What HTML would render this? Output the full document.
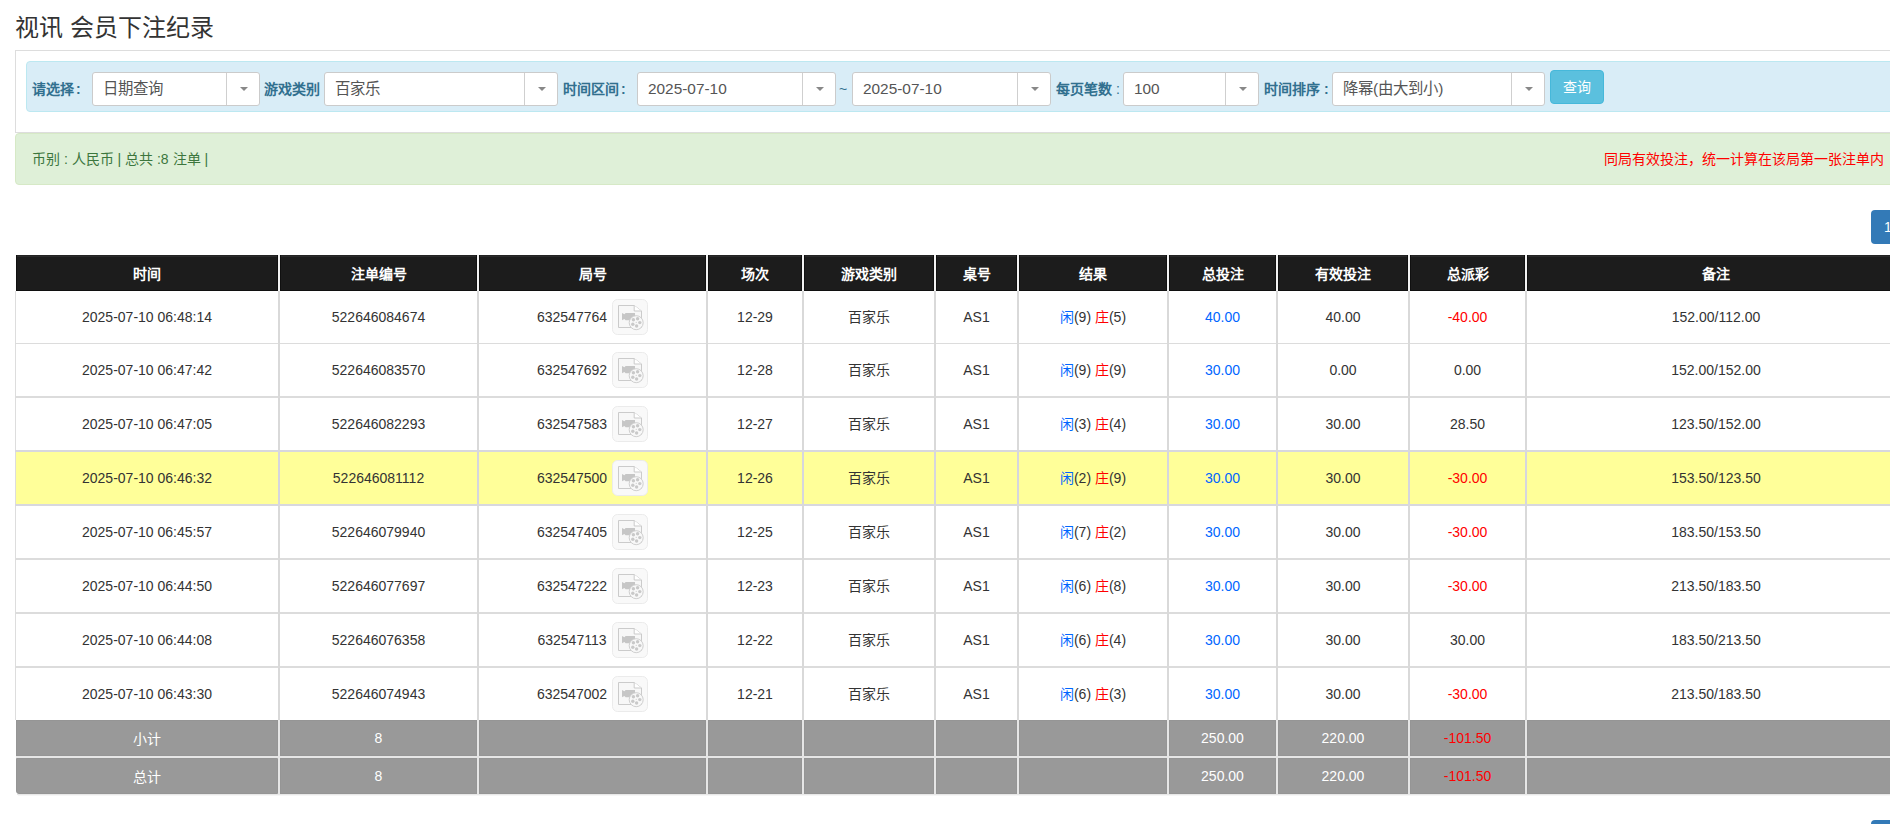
<!DOCTYPE html>
<html lang="zh-CN"><head><meta charset="utf-8"><title>视讯 会员下注纪录</title>
<style>
*{box-sizing:border-box}
html,body{margin:0;padding:0}
body{width:1890px;height:824px;overflow:hidden;position:relative;background:#fff;font-family:"Liberation Sans",sans-serif;font-size:14px;color:#333}
.a{position:absolute}
.c{position:absolute;display:flex;align-items:center;justify-content:center;white-space:nowrap}
h1{position:absolute;left:15px;top:10px;margin:0;font-size:24px;font-weight:normal;line-height:36px;color:#333}
.panel{left:15px;top:50px;width:1900px;height:83px;border:1px solid #ddd;background:#fff}
.info{left:26px;top:61px;width:1880px;height:51px;border:1px solid #bce8f1;background:#d9edf7;border-radius:4px}
.lbl{color:#31708f;font-weight:bold;top:72px;height:34px;line-height:34px}
.lbl i{font-style:normal;font-weight:normal}
.sel{top:72px;height:34px;border:1px solid #cbcbcb;border-radius:3px;background:#fff;color:#555;line-height:32px;padding-left:10px;font-size:15.4px}
.sel .dv{position:absolute;top:0;bottom:0;width:1px;background:#cfcfcf}
.sel .ar{position:absolute;top:14px;width:0;height:0;border-left:4px solid transparent;border-right:4px solid transparent;border-top:4px solid #888}
.btn{left:1550px;top:70px;width:54px;height:34px;background:#5bc0de;border:1px solid #46b8da;border-radius:4px;color:#fff;line-height:32px;text-align:center}
.ok{left:15px;top:133px;width:1900px;height:52px;border:1px solid #d6e9c6;background:#dff0d8;border-radius:4px}
.pg{left:1871px;width:34px;height:34px;background:#337ab7;border-radius:4px;color:#fff;line-height:34px;padding-left:13px}
.th{color:#fff;font-weight:bold;background:#1c1c1c;border:1px solid #101010;border-top:none;box-shadow:inset 0 1px 0 #232323,inset 0 2px 0 #2a2a2a}
.b{color:#0066ff}.r{color:#ff0000}.k{position:relative;top:-1px}
.gr{color:#fff;background:#999;border:1px solid #959595}
</style></head><body>
<h1>视讯 会员下注纪录</h1>
<div class="a panel"></div>
<div class="a info"></div>

<div class="a lbl" style="left:32px">请选择<span style="margin-left:2px">:</span></div>
<div class="a sel" style="left:92px;width:168px">日期查询<div class="dv" style="left:133px"></div><div class="ar" style="left:147px"></div></div>
<div class="a lbl" style="left:264px">游戏类别</div>
<div class="a sel" style="left:324px;width:234px">百家乐<div class="dv" style="left:199px"></div><div class="ar" style="left:213px"></div></div>
<div class="a lbl" style="left:563px">时间区间<span style="margin-left:2px">:</span></div>
<div class="a sel" style="left:637px;width:199px">2025-07-10<div class="dv" style="left:164px"></div><div class="ar" style="left:178px"></div></div>
<div class="a" style="left:839px;top:72px;height:34px;line-height:34px;color:#31708f">~</div>
<div class="a sel" style="left:852px;width:199px">2025-07-10<div class="dv" style="left:164px"></div><div class="ar" style="left:178px"></div></div>
<div class="a lbl" style="left:1056px">每页笔数<i> :</i></div>
<div class="a sel" style="left:1123px;width:136px">100<div class="dv" style="left:101px"></div><div class="ar" style="left:115px"></div></div>
<div class="a lbl" style="left:1264px">时间排序 :</div>
<div class="a sel" style="left:1332px;width:213px">降幂(由大到小)<div class="dv" style="left:178px"></div><div class="ar" style="left:192px"></div></div>
<div class="a btn">查询</div>
<div class="a ok"></div>
<div class="a" style="left:32px;top:145px;line-height:28px;color:#3c763d">币别 : 人民币 | 总共 :8 注单 |</div>
<div class="a" style="left:1604px;top:145px;line-height:28px;color:#f00">同局有效投注，统一计算在该局第一张注单内</div>
<div class="a pg" style="top:210px">1</div>
<div class="a pg" style="top:820px">1</div>
<div class="a" style="left:15px;top:291px;width:1px;height:429px;background:#ddd"></div>
<div class="c th" style="left:16px;top:255px;width:262px;height:36px">时间</div>
<div class="c th" style="left:280px;top:255px;width:197px;height:36px">注单编号</div>
<div class="c th" style="left:479px;top:255px;width:227px;height:36px">局号</div>
<div class="c th" style="left:708px;top:255px;width:94px;height:36px">场次</div>
<div class="c th" style="left:804px;top:255px;width:130px;height:36px">游戏类别</div>
<div class="c th" style="left:936px;top:255px;width:81px;height:36px">桌号</div>
<div class="c th" style="left:1019px;top:255px;width:148px;height:36px">结果</div>
<div class="c th" style="left:1169px;top:255px;width:107px;height:36px">总投注</div>
<div class="c th" style="left:1278px;top:255px;width:130px;height:36px">有效投注</div>
<div class="c th" style="left:1410px;top:255px;width:115px;height:36px">总派彩</div>
<div class="c th" style="left:1527px;top:255px;width:378px;height:36px">备注</div>
<div class="a" style="left:278px;top:255px;width:2px;height:36px;background:#f2f2f2"></div>
<div class="a" style="left:477px;top:255px;width:2px;height:36px;background:#f2f2f2"></div>
<div class="a" style="left:706px;top:255px;width:2px;height:36px;background:#f2f2f2"></div>
<div class="a" style="left:802px;top:255px;width:2px;height:36px;background:#f2f2f2"></div>
<div class="a" style="left:934px;top:255px;width:2px;height:36px;background:#f2f2f2"></div>
<div class="a" style="left:1017px;top:255px;width:2px;height:36px;background:#f2f2f2"></div>
<div class="a" style="left:1167px;top:255px;width:2px;height:36px;background:#f2f2f2"></div>
<div class="a" style="left:1276px;top:255px;width:2px;height:36px;background:#f2f2f2"></div>
<div class="a" style="left:1408px;top:255px;width:2px;height:36px;background:#f2f2f2"></div>
<div class="a" style="left:1525px;top:255px;width:2px;height:36px;background:#f2f2f2"></div>
<div class="a" style="left:16px;top:452px;width:1889px;height:52px;background:#ffff99"></div>
<div class="a" style="left:15px;top:343px;width:1890px;height:1px;background:#dcdcdc"></div>
<div class="a" style="left:15px;top:396px;width:1890px;height:2px;background:#dcdcdc"></div>
<div class="a" style="left:15px;top:450px;width:1890px;height:2px;background:#d8d8de"></div>
<div class="a" style="left:15px;top:504px;width:1890px;height:2px;background:#d8d8de"></div>
<div class="a" style="left:15px;top:558px;width:1890px;height:2px;background:#dcdcdc"></div>
<div class="a" style="left:15px;top:612px;width:1890px;height:2px;background:#dcdcdc"></div>
<div class="a" style="left:15px;top:666px;width:1890px;height:2px;background:#dcdcdc"></div>
<div class="a" style="left:278px;top:291px;width:2px;height:429px;background:#d9d9d9"></div>
<div class="a" style="left:278px;top:452px;width:2px;height:52px;background:#d6d6de"></div>
<div class="a" style="left:477px;top:291px;width:2px;height:429px;background:#d9d9d9"></div>
<div class="a" style="left:477px;top:452px;width:2px;height:52px;background:#d6d6de"></div>
<div class="a" style="left:706px;top:291px;width:2px;height:429px;background:#d9d9d9"></div>
<div class="a" style="left:706px;top:452px;width:2px;height:52px;background:#d6d6de"></div>
<div class="a" style="left:802px;top:291px;width:2px;height:429px;background:#d9d9d9"></div>
<div class="a" style="left:802px;top:452px;width:2px;height:52px;background:#d6d6de"></div>
<div class="a" style="left:934px;top:291px;width:2px;height:429px;background:#d9d9d9"></div>
<div class="a" style="left:934px;top:452px;width:2px;height:52px;background:#d6d6de"></div>
<div class="a" style="left:1017px;top:291px;width:2px;height:429px;background:#d9d9d9"></div>
<div class="a" style="left:1017px;top:452px;width:2px;height:52px;background:#d6d6de"></div>
<div class="a" style="left:1167px;top:291px;width:2px;height:429px;background:#d9d9d9"></div>
<div class="a" style="left:1167px;top:452px;width:2px;height:52px;background:#d6d6de"></div>
<div class="a" style="left:1276px;top:291px;width:2px;height:429px;background:#d9d9d9"></div>
<div class="a" style="left:1276px;top:452px;width:2px;height:52px;background:#d6d6de"></div>
<div class="a" style="left:1408px;top:291px;width:2px;height:429px;background:#d9d9d9"></div>
<div class="a" style="left:1408px;top:452px;width:2px;height:52px;background:#d6d6de"></div>
<div class="a" style="left:1525px;top:291px;width:2px;height:429px;background:#d9d9d9"></div>
<div class="a" style="left:1525px;top:452px;width:2px;height:52px;background:#d6d6de"></div>
<div class="c" style="left:16px;top:291px;width:262px;height:52px">2025-07-10 06:48:14</div>
<div class="c" style="left:280px;top:291px;width:197px;height:52px">522646084674</div>
<div class="c" style="left:479px;top:291px;width:227px;height:52px">632547764<span style="display:inline-block;width:36px;height:36px;margin-left:5px"><svg width="36" height="36" viewBox="0 0 36 36"><rect x="0.5" y="0.5" width="35" height="35" rx="5" fill="#f9f9f9" stroke="#ebebeb"/><path d="M6.5 6.5H22.2L29.5 12V28.5H6.5Z" fill="#f7f7f7" stroke="#cbcbcb"/><path d="M22.2 6.5V12H29.5" fill="#fff" stroke="#cbcbcb"/><path d="M10 14L12.4 15.2L13.6 14H23V21.2H13.6L12.4 20L10 21.2Z" fill="#c6c6c6"/><circle cx="24.2" cy="23.7" r="7" fill="#f8f8f8" stroke="#cfcfcf"/><g fill="#c9c9c9"><circle cx="21.4" cy="20.8" r="1.7"/><circle cx="25.6" cy="19.8" r="1.7"/><circle cx="27.8" cy="23.6" r="1.7"/><circle cx="20.8" cy="25.2" r="1.7"/><circle cx="24.6" cy="27" r="1.7"/><circle cx="24.2" cy="23.3" r="0.6"/></g></svg></span></div>
<div class="c" style="left:708px;top:291px;width:94px;height:52px">12-29</div>
<div class="c" style="left:804px;top:291px;width:130px;height:52px"><span class="k">百家乐</span></div>
<div class="c" style="left:936px;top:291px;width:81px;height:52px">AS1</div>
<div class="c" style="left:1019px;top:291px;width:148px;height:52px"><span class="b k">闲</span>(9)&nbsp;<span class="r k">庄</span>(5)</div>
<div class="c" style="left:1169px;top:291px;width:107px;height:52px"><span class="b">40.00</span></div>
<div class="c" style="left:1278px;top:291px;width:130px;height:52px">40.00</div>
<div class="c" style="left:1410px;top:291px;width:115px;height:52px"><span class="r">-40.00</span></div>
<div class="c" style="left:1527px;top:291px;width:378px;height:52px">152.00/112.00</div>
<div class="c" style="left:16px;top:344px;width:262px;height:52px">2025-07-10 06:47:42</div>
<div class="c" style="left:280px;top:344px;width:197px;height:52px">522646083570</div>
<div class="c" style="left:479px;top:344px;width:227px;height:52px">632547692<span style="display:inline-block;width:36px;height:36px;margin-left:5px"><svg width="36" height="36" viewBox="0 0 36 36"><rect x="0.5" y="0.5" width="35" height="35" rx="5" fill="#f9f9f9" stroke="#ebebeb"/><path d="M6.5 6.5H22.2L29.5 12V28.5H6.5Z" fill="#f7f7f7" stroke="#cbcbcb"/><path d="M22.2 6.5V12H29.5" fill="#fff" stroke="#cbcbcb"/><path d="M10 14L12.4 15.2L13.6 14H23V21.2H13.6L12.4 20L10 21.2Z" fill="#c6c6c6"/><circle cx="24.2" cy="23.7" r="7" fill="#f8f8f8" stroke="#cfcfcf"/><g fill="#c9c9c9"><circle cx="21.4" cy="20.8" r="1.7"/><circle cx="25.6" cy="19.8" r="1.7"/><circle cx="27.8" cy="23.6" r="1.7"/><circle cx="20.8" cy="25.2" r="1.7"/><circle cx="24.6" cy="27" r="1.7"/><circle cx="24.2" cy="23.3" r="0.6"/></g></svg></span></div>
<div class="c" style="left:708px;top:344px;width:94px;height:52px">12-28</div>
<div class="c" style="left:804px;top:344px;width:130px;height:52px"><span class="k">百家乐</span></div>
<div class="c" style="left:936px;top:344px;width:81px;height:52px">AS1</div>
<div class="c" style="left:1019px;top:344px;width:148px;height:52px"><span class="b k">闲</span>(9)&nbsp;<span class="r k">庄</span>(9)</div>
<div class="c" style="left:1169px;top:344px;width:107px;height:52px"><span class="b">30.00</span></div>
<div class="c" style="left:1278px;top:344px;width:130px;height:52px">0.00</div>
<div class="c" style="left:1410px;top:344px;width:115px;height:52px">0.00</div>
<div class="c" style="left:1527px;top:344px;width:378px;height:52px">152.00/152.00</div>
<div class="c" style="left:16px;top:398px;width:262px;height:52px">2025-07-10 06:47:05</div>
<div class="c" style="left:280px;top:398px;width:197px;height:52px">522646082293</div>
<div class="c" style="left:479px;top:398px;width:227px;height:52px">632547583<span style="display:inline-block;width:36px;height:36px;margin-left:5px"><svg width="36" height="36" viewBox="0 0 36 36"><rect x="0.5" y="0.5" width="35" height="35" rx="5" fill="#f9f9f9" stroke="#ebebeb"/><path d="M6.5 6.5H22.2L29.5 12V28.5H6.5Z" fill="#f7f7f7" stroke="#cbcbcb"/><path d="M22.2 6.5V12H29.5" fill="#fff" stroke="#cbcbcb"/><path d="M10 14L12.4 15.2L13.6 14H23V21.2H13.6L12.4 20L10 21.2Z" fill="#c6c6c6"/><circle cx="24.2" cy="23.7" r="7" fill="#f8f8f8" stroke="#cfcfcf"/><g fill="#c9c9c9"><circle cx="21.4" cy="20.8" r="1.7"/><circle cx="25.6" cy="19.8" r="1.7"/><circle cx="27.8" cy="23.6" r="1.7"/><circle cx="20.8" cy="25.2" r="1.7"/><circle cx="24.6" cy="27" r="1.7"/><circle cx="24.2" cy="23.3" r="0.6"/></g></svg></span></div>
<div class="c" style="left:708px;top:398px;width:94px;height:52px">12-27</div>
<div class="c" style="left:804px;top:398px;width:130px;height:52px"><span class="k">百家乐</span></div>
<div class="c" style="left:936px;top:398px;width:81px;height:52px">AS1</div>
<div class="c" style="left:1019px;top:398px;width:148px;height:52px"><span class="b k">闲</span>(3)&nbsp;<span class="r k">庄</span>(4)</div>
<div class="c" style="left:1169px;top:398px;width:107px;height:52px"><span class="b">30.00</span></div>
<div class="c" style="left:1278px;top:398px;width:130px;height:52px">30.00</div>
<div class="c" style="left:1410px;top:398px;width:115px;height:52px">28.50</div>
<div class="c" style="left:1527px;top:398px;width:378px;height:52px">123.50/152.00</div>
<div class="c" style="left:16px;top:452px;width:262px;height:52px">2025-07-10 06:46:32</div>
<div class="c" style="left:280px;top:452px;width:197px;height:52px">522646081112</div>
<div class="c" style="left:479px;top:452px;width:227px;height:52px">632547500<span style="display:inline-block;width:36px;height:36px;margin-left:5px"><svg width="36" height="36" viewBox="0 0 36 36"><rect x="0.5" y="0.5" width="35" height="35" rx="5" fill="#f9f9f9" stroke="#ebebeb"/><path d="M6.5 6.5H22.2L29.5 12V28.5H6.5Z" fill="#f7f7f7" stroke="#cbcbcb"/><path d="M22.2 6.5V12H29.5" fill="#fff" stroke="#cbcbcb"/><path d="M10 14L12.4 15.2L13.6 14H23V21.2H13.6L12.4 20L10 21.2Z" fill="#c6c6c6"/><circle cx="24.2" cy="23.7" r="7" fill="#f8f8f8" stroke="#cfcfcf"/><g fill="#c9c9c9"><circle cx="21.4" cy="20.8" r="1.7"/><circle cx="25.6" cy="19.8" r="1.7"/><circle cx="27.8" cy="23.6" r="1.7"/><circle cx="20.8" cy="25.2" r="1.7"/><circle cx="24.6" cy="27" r="1.7"/><circle cx="24.2" cy="23.3" r="0.6"/></g></svg></span></div>
<div class="c" style="left:708px;top:452px;width:94px;height:52px">12-26</div>
<div class="c" style="left:804px;top:452px;width:130px;height:52px"><span class="k">百家乐</span></div>
<div class="c" style="left:936px;top:452px;width:81px;height:52px">AS1</div>
<div class="c" style="left:1019px;top:452px;width:148px;height:52px"><span class="b k">闲</span>(2)&nbsp;<span class="r k">庄</span>(9)</div>
<div class="c" style="left:1169px;top:452px;width:107px;height:52px"><span class="b">30.00</span></div>
<div class="c" style="left:1278px;top:452px;width:130px;height:52px">30.00</div>
<div class="c" style="left:1410px;top:452px;width:115px;height:52px"><span class="r">-30.00</span></div>
<div class="c" style="left:1527px;top:452px;width:378px;height:52px">153.50/123.50</div>
<div class="c" style="left:16px;top:506px;width:262px;height:52px">2025-07-10 06:45:57</div>
<div class="c" style="left:280px;top:506px;width:197px;height:52px">522646079940</div>
<div class="c" style="left:479px;top:506px;width:227px;height:52px">632547405<span style="display:inline-block;width:36px;height:36px;margin-left:5px"><svg width="36" height="36" viewBox="0 0 36 36"><rect x="0.5" y="0.5" width="35" height="35" rx="5" fill="#f9f9f9" stroke="#ebebeb"/><path d="M6.5 6.5H22.2L29.5 12V28.5H6.5Z" fill="#f7f7f7" stroke="#cbcbcb"/><path d="M22.2 6.5V12H29.5" fill="#fff" stroke="#cbcbcb"/><path d="M10 14L12.4 15.2L13.6 14H23V21.2H13.6L12.4 20L10 21.2Z" fill="#c6c6c6"/><circle cx="24.2" cy="23.7" r="7" fill="#f8f8f8" stroke="#cfcfcf"/><g fill="#c9c9c9"><circle cx="21.4" cy="20.8" r="1.7"/><circle cx="25.6" cy="19.8" r="1.7"/><circle cx="27.8" cy="23.6" r="1.7"/><circle cx="20.8" cy="25.2" r="1.7"/><circle cx="24.6" cy="27" r="1.7"/><circle cx="24.2" cy="23.3" r="0.6"/></g></svg></span></div>
<div class="c" style="left:708px;top:506px;width:94px;height:52px">12-25</div>
<div class="c" style="left:804px;top:506px;width:130px;height:52px"><span class="k">百家乐</span></div>
<div class="c" style="left:936px;top:506px;width:81px;height:52px">AS1</div>
<div class="c" style="left:1019px;top:506px;width:148px;height:52px"><span class="b k">闲</span>(7)&nbsp;<span class="r k">庄</span>(2)</div>
<div class="c" style="left:1169px;top:506px;width:107px;height:52px"><span class="b">30.00</span></div>
<div class="c" style="left:1278px;top:506px;width:130px;height:52px">30.00</div>
<div class="c" style="left:1410px;top:506px;width:115px;height:52px"><span class="r">-30.00</span></div>
<div class="c" style="left:1527px;top:506px;width:378px;height:52px">183.50/153.50</div>
<div class="c" style="left:16px;top:560px;width:262px;height:52px">2025-07-10 06:44:50</div>
<div class="c" style="left:280px;top:560px;width:197px;height:52px">522646077697</div>
<div class="c" style="left:479px;top:560px;width:227px;height:52px">632547222<span style="display:inline-block;width:36px;height:36px;margin-left:5px"><svg width="36" height="36" viewBox="0 0 36 36"><rect x="0.5" y="0.5" width="35" height="35" rx="5" fill="#f9f9f9" stroke="#ebebeb"/><path d="M6.5 6.5H22.2L29.5 12V28.5H6.5Z" fill="#f7f7f7" stroke="#cbcbcb"/><path d="M22.2 6.5V12H29.5" fill="#fff" stroke="#cbcbcb"/><path d="M10 14L12.4 15.2L13.6 14H23V21.2H13.6L12.4 20L10 21.2Z" fill="#c6c6c6"/><circle cx="24.2" cy="23.7" r="7" fill="#f8f8f8" stroke="#cfcfcf"/><g fill="#c9c9c9"><circle cx="21.4" cy="20.8" r="1.7"/><circle cx="25.6" cy="19.8" r="1.7"/><circle cx="27.8" cy="23.6" r="1.7"/><circle cx="20.8" cy="25.2" r="1.7"/><circle cx="24.6" cy="27" r="1.7"/><circle cx="24.2" cy="23.3" r="0.6"/></g></svg></span></div>
<div class="c" style="left:708px;top:560px;width:94px;height:52px">12-23</div>
<div class="c" style="left:804px;top:560px;width:130px;height:52px"><span class="k">百家乐</span></div>
<div class="c" style="left:936px;top:560px;width:81px;height:52px">AS1</div>
<div class="c" style="left:1019px;top:560px;width:148px;height:52px"><span class="b k">闲</span>(6)&nbsp;<span class="r k">庄</span>(8)</div>
<div class="c" style="left:1169px;top:560px;width:107px;height:52px"><span class="b">30.00</span></div>
<div class="c" style="left:1278px;top:560px;width:130px;height:52px">30.00</div>
<div class="c" style="left:1410px;top:560px;width:115px;height:52px"><span class="r">-30.00</span></div>
<div class="c" style="left:1527px;top:560px;width:378px;height:52px">213.50/183.50</div>
<div class="c" style="left:16px;top:614px;width:262px;height:52px">2025-07-10 06:44:08</div>
<div class="c" style="left:280px;top:614px;width:197px;height:52px">522646076358</div>
<div class="c" style="left:479px;top:614px;width:227px;height:52px">632547113<span style="display:inline-block;width:36px;height:36px;margin-left:5px"><svg width="36" height="36" viewBox="0 0 36 36"><rect x="0.5" y="0.5" width="35" height="35" rx="5" fill="#f9f9f9" stroke="#ebebeb"/><path d="M6.5 6.5H22.2L29.5 12V28.5H6.5Z" fill="#f7f7f7" stroke="#cbcbcb"/><path d="M22.2 6.5V12H29.5" fill="#fff" stroke="#cbcbcb"/><path d="M10 14L12.4 15.2L13.6 14H23V21.2H13.6L12.4 20L10 21.2Z" fill="#c6c6c6"/><circle cx="24.2" cy="23.7" r="7" fill="#f8f8f8" stroke="#cfcfcf"/><g fill="#c9c9c9"><circle cx="21.4" cy="20.8" r="1.7"/><circle cx="25.6" cy="19.8" r="1.7"/><circle cx="27.8" cy="23.6" r="1.7"/><circle cx="20.8" cy="25.2" r="1.7"/><circle cx="24.6" cy="27" r="1.7"/><circle cx="24.2" cy="23.3" r="0.6"/></g></svg></span></div>
<div class="c" style="left:708px;top:614px;width:94px;height:52px">12-22</div>
<div class="c" style="left:804px;top:614px;width:130px;height:52px"><span class="k">百家乐</span></div>
<div class="c" style="left:936px;top:614px;width:81px;height:52px">AS1</div>
<div class="c" style="left:1019px;top:614px;width:148px;height:52px"><span class="b k">闲</span>(6)&nbsp;<span class="r k">庄</span>(4)</div>
<div class="c" style="left:1169px;top:614px;width:107px;height:52px"><span class="b">30.00</span></div>
<div class="c" style="left:1278px;top:614px;width:130px;height:52px">30.00</div>
<div class="c" style="left:1410px;top:614px;width:115px;height:52px">30.00</div>
<div class="c" style="left:1527px;top:614px;width:378px;height:52px">183.50/213.50</div>
<div class="c" style="left:16px;top:668px;width:262px;height:52px">2025-07-10 06:43:30</div>
<div class="c" style="left:280px;top:668px;width:197px;height:52px">522646074943</div>
<div class="c" style="left:479px;top:668px;width:227px;height:52px">632547002<span style="display:inline-block;width:36px;height:36px;margin-left:5px"><svg width="36" height="36" viewBox="0 0 36 36"><rect x="0.5" y="0.5" width="35" height="35" rx="5" fill="#f9f9f9" stroke="#ebebeb"/><path d="M6.5 6.5H22.2L29.5 12V28.5H6.5Z" fill="#f7f7f7" stroke="#cbcbcb"/><path d="M22.2 6.5V12H29.5" fill="#fff" stroke="#cbcbcb"/><path d="M10 14L12.4 15.2L13.6 14H23V21.2H13.6L12.4 20L10 21.2Z" fill="#c6c6c6"/><circle cx="24.2" cy="23.7" r="7" fill="#f8f8f8" stroke="#cfcfcf"/><g fill="#c9c9c9"><circle cx="21.4" cy="20.8" r="1.7"/><circle cx="25.6" cy="19.8" r="1.7"/><circle cx="27.8" cy="23.6" r="1.7"/><circle cx="20.8" cy="25.2" r="1.7"/><circle cx="24.6" cy="27" r="1.7"/><circle cx="24.2" cy="23.3" r="0.6"/></g></svg></span></div>
<div class="c" style="left:708px;top:668px;width:94px;height:52px">12-21</div>
<div class="c" style="left:804px;top:668px;width:130px;height:52px"><span class="k">百家乐</span></div>
<div class="c" style="left:936px;top:668px;width:81px;height:52px">AS1</div>
<div class="c" style="left:1019px;top:668px;width:148px;height:52px"><span class="b k">闲</span>(6)&nbsp;<span class="r k">庄</span>(3)</div>
<div class="c" style="left:1169px;top:668px;width:107px;height:52px"><span class="b">30.00</span></div>
<div class="c" style="left:1278px;top:668px;width:130px;height:52px">30.00</div>
<div class="c" style="left:1410px;top:668px;width:115px;height:52px"><span class="r">-30.00</span></div>
<div class="c" style="left:1527px;top:668px;width:378px;height:52px">213.50/183.50</div>
<div class="c gr" style="left:16px;top:720px;width:262px;height:36px">小计</div>
<div class="c gr" style="left:280px;top:720px;width:197px;height:36px">8</div>
<div class="c gr" style="left:479px;top:720px;width:227px;height:36px"></div>
<div class="c gr" style="left:708px;top:720px;width:94px;height:36px"></div>
<div class="c gr" style="left:804px;top:720px;width:130px;height:36px"></div>
<div class="c gr" style="left:936px;top:720px;width:81px;height:36px"></div>
<div class="c gr" style="left:1019px;top:720px;width:148px;height:36px"></div>
<div class="c gr" style="left:1169px;top:720px;width:107px;height:36px">250.00</div>
<div class="c gr" style="left:1278px;top:720px;width:130px;height:36px">220.00</div>
<div class="c gr" style="left:1410px;top:720px;width:115px;height:36px"><span class="r">-101.50</span></div>
<div class="c gr" style="left:1527px;top:720px;width:378px;height:36px"></div>
<div class="c gr" style="border-bottom-left-radius:3px;left:16px;top:758px;width:262px;height:36px">总计</div>
<div class="c gr" style="left:280px;top:758px;width:197px;height:36px">8</div>
<div class="c gr" style="left:479px;top:758px;width:227px;height:36px"></div>
<div class="c gr" style="left:708px;top:758px;width:94px;height:36px"></div>
<div class="c gr" style="left:804px;top:758px;width:130px;height:36px"></div>
<div class="c gr" style="left:936px;top:758px;width:81px;height:36px"></div>
<div class="c gr" style="left:1019px;top:758px;width:148px;height:36px"></div>
<div class="c gr" style="left:1169px;top:758px;width:107px;height:36px">250.00</div>
<div class="c gr" style="left:1278px;top:758px;width:130px;height:36px">220.00</div>
<div class="c gr" style="left:1410px;top:758px;width:115px;height:36px"><span class="r">-101.50</span></div>
<div class="c gr" style="left:1527px;top:758px;width:378px;height:36px"></div>
<div class="a" style="left:16px;top:756px;width:1890px;height:2px;background:#e6e6e6"></div>
<div class="a" style="left:17px;top:794px;width:1890px;height:1px;background:#e8e8e8"></div>
<div class="a" style="left:18px;top:795px;width:1890px;height:1px;background:#f6f6f6"></div>
<div class="a" style="left:278px;top:720px;width:2px;height:74px;background:#e6e6e6"></div>
<div class="a" style="left:477px;top:720px;width:2px;height:74px;background:#e6e6e6"></div>
<div class="a" style="left:706px;top:720px;width:2px;height:74px;background:#e6e6e6"></div>
<div class="a" style="left:802px;top:720px;width:2px;height:74px;background:#e6e6e6"></div>
<div class="a" style="left:934px;top:720px;width:2px;height:74px;background:#e6e6e6"></div>
<div class="a" style="left:1017px;top:720px;width:2px;height:74px;background:#e6e6e6"></div>
<div class="a" style="left:1167px;top:720px;width:2px;height:74px;background:#e6e6e6"></div>
<div class="a" style="left:1276px;top:720px;width:2px;height:74px;background:#e6e6e6"></div>
<div class="a" style="left:1408px;top:720px;width:2px;height:74px;background:#e6e6e6"></div>
<div class="a" style="left:1525px;top:720px;width:2px;height:74px;background:#e6e6e6"></div>
</body></html>
